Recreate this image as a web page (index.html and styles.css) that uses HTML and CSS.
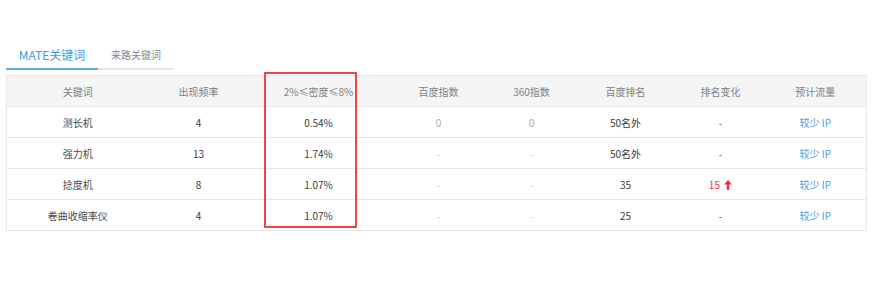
FILE: index.html
```html
<!DOCTYPE html>
<html lang="zh-CN">
<head>
<meta charset="utf-8">
<title>关键词</title>
<link rel="stylesheet" href="styles.css">
</head>
<body>
<div class="page">
  <div class="tabs">
    <div class="tab active">MATE关键词</div>
    <div class="tab">来路关键词</div>
  </div>
  <div class="table-wrap">
    <table class="kw">
      <colgroup>
        <col class="c1"><col class="c2"><col class="c3"><col class="c4"><col class="c5"><col class="c6"><col class="c7"><col class="c8">
      </colgroup>
      <thead>
        <tr><th>关键词</th><th>出现频率</th><th>2%≤密度≤8%</th><th>百度指数</th><th>360指数</th><th>百度排名</th><th>排名变化</th><th>预计流量</th></tr>
      </thead>
      <tbody>
        <tr><td class="name">测长机</td><td>4</td><td>0.54%</td><td class="muted">0</td><td class="muted">0</td><td>50名外</td><td class="dash">-</td><td class="link">较少 IP</td></tr>
        <tr><td class="name">强力机</td><td>13</td><td>1.74%</td><td class="light">-</td><td class="light">-</td><td>50名外</td><td class="dash">-</td><td class="link">较少 IP</td></tr>
        <tr><td class="name">捻度机</td><td>8</td><td>1.07%</td><td class="light">-</td><td class="light">-</td><td>35</td><td class="up">15 <svg class="arrow" width="8" height="10" viewBox="0 0 8 10"><path d="M4 0 L8 4.5 L5.2 4.5 L5.2 10 L2.8 10 L2.8 4.5 L0 4.5 Z" fill="#f23030"/></svg></td><td class="link">较少 IP</td></tr>
        <tr><td class="name">卷曲收缩率仪</td><td>4</td><td>1.07%</td><td class="light">-</td><td class="light">-</td><td>25</td><td class="dash">-</td><td class="link">较少 IP</td></tr>
      </tbody>
    </table>
    <div class="highlight"></div>
  </div>
</div>
</body>
</html>
```

FILE: styles.css
```css
html, body {
  margin: 0;
  padding: 0;
  background: #fff;
}
body {
  font-family: "Noto Sans CJK SC", "Noto Sans", sans-serif;
  color: #333;
}
.page {
  padding: 43px 20px 0 6px;
}
.tabs {
  display: flex;
  width: 168px;
  border-bottom: 2px solid #e6e6e6;
}
.tab {
  height: 25px;
  line-height: 24px;
  font-size: 10px;
  color: #888;
  text-align: center;
  margin-bottom: -2px;
  border-bottom: 2px solid transparent;
}
.tab.active {
  width: 92px;
  font-size: 12px;
  color: #3d9ae8;
  border-bottom-color: #5aaee6;
}
.tab:not(.active) {
  width: 76px;
}
.table-wrap {
  position: relative;
  margin-top: 5px;
  width: 860px;
}
.kw {
  width: 860px;
  border-collapse: collapse;
  table-layout: fixed;
  border: 1px solid #e8e8e8;
  font-size: 10px;
}
.c1 { width: 142px; }
.c2 { width: 100px; }
.c3 { width: 140px; }
.c4 { width: 100px; }
.c5 { width: 86px; }
.c6 { width: 102px; }
.c7 { width: 88px; }
.c8 { width: 102px; }
.kw th {
  height: 30px;
  padding: 0;
  background: #f5f5f5;
  color: #808080;
  font-weight: normal;
  text-align: center;
  border-bottom: 1px solid #e8e8e8;
}
.kw td {
  height: 30px;
  padding: 0;
  text-align: center;
  color: #3a3a3a;
  border-bottom: 1px solid #e8e8e8;
}
.kw td.name { color: #4a4a4a; }
.kw td.muted { color: #aaa; }
.kw td.light { color: #c4c4c4; }
.kw td.dash { color: #555; }
.kw td.link { color: #4a9de2; }
.kw td.up { color: #f23030; }
.arrow {
  vertical-align: -1px;
  margin-left: 2px;
}
.highlight {
  position: absolute;
  left: 258px;
  top: -3px;
  width: 89px;
  height: 152px;
  border: 2px solid #f04545;
}
```
